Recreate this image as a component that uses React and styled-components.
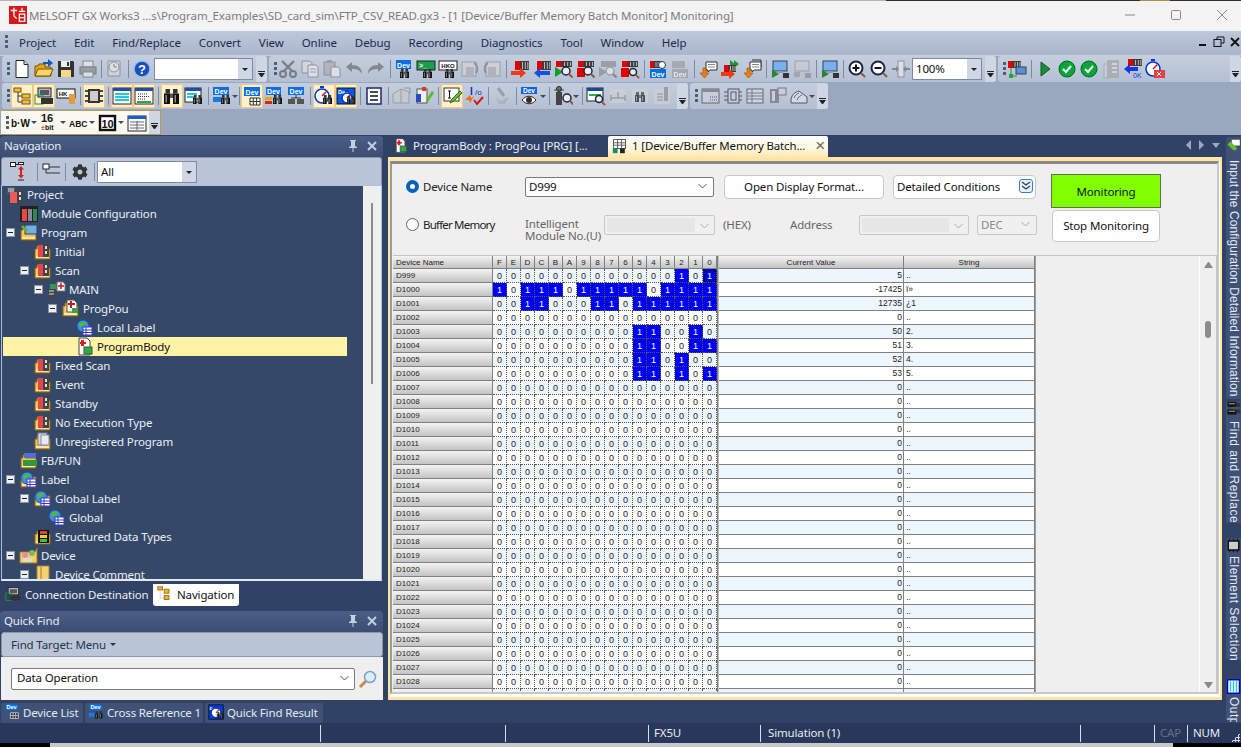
import React from 'react';
import styled, { createGlobalStyle } from 'styled-components';
import { FaCog } from 'react-icons/fa';

const Global = createGlobalStyle`
  html, body { margin: 0; padding: 0; background: #2f4063; }
  *, *::before, *::after { box-sizing: border-box; }
`;
const UI = `"Noto Sans", "Open Sans", sans-serif`;
const Navy = `background-color:#2f4063;background-image:repeating-conic-gradient(#2d3e60 0 25%,#33456a 0 50%);background-size:2px 2px;`;

/* ---------- icon primitives ---------- */
const T = ({ x, y, s = 7, f = '#fff', b = 700, a = 'start', children }) => (
  <text x={x} y={y} fontSize={s} fill={f} fontWeight={b} textAnchor={a} fontFamily="Liberation Sans, sans-serif">{children}</text>
);
const bin = (x, y, s = 1) => (
  <g transform={`translate(${x} ${y}) scale(${s})`}>
    <rect x="1" y="0" width="3" height="3" fill="#333" />
    <rect x="0" y="3" width="4" height="7" fill="#111" />
    <rect x="6" y="0" width="3" height="3" fill="#333" />
    <rect x="6" y="3" width="4" height="7" fill="#111" />
    <rect x="4" y="3" width="2" height="3" fill="#555" />
    <rect x="1" y="4" width="1" height="5" fill="#888" />
    <rect x="7" y="4" width="1" height="5" fill="#888" />
  </g>
);
const dev = (x, y, w = 14, h = 8, c = '#0a6ee0') => (
  <g>
    <rect x={x} y={y} width={w} height={h} fill={c} />
    <T x={x + w / 2} y={y + h - 1.5} a="middle" s={7}>Dev</T>
  </g>
);
const plc = (x, y, w = 14, h = 8) => (
  <g>
    <rect x={x} y={y} width={w} height={h} fill="#3a3a3a" />
    <rect x={x} y={y} width={w * 0.36} height={h} fill="#e00000" />
    {[0.5, 0.7, 0.88].map(k => <rect key={k} x={x + w * k} y={y + 1} width="1" height={h - 2} fill="#bbb" />)}
  </g>
);
const mag = (x, y, r = 4, c = '#223') => (
  <g>
    <circle cx={x} cy={y} r={r} fill="#e8eef6" stroke={c} strokeWidth="1.5" />
    <path d={`M${x + r * 0.75} ${y + r * 0.75}l3.5 3.5`} stroke="#8a5a3c" strokeWidth="2" />
  </g>
);
const win = (x, y, w, h, c = '#1f4fa0') => (
  <g>
    <rect x={x} y={y} width={w} height={h} fill="#fff" stroke="#223" />
    <rect x={x} y={y} width={w} height="3" fill={c} />
  </g>
);
const folder = (extra) => (
  <g>
    <path d="M2 7h2V4h2v3h11v10H2z" fill="#f6c65b" stroke="#8a6413" />
    <rect x="3" y="14" width="13" height="2" fill="#fbe6ad" />
    {extra}
  </g>
);
const pouBars = (
  <g>
    <rect x="5" y="3" width="5" height="12" fill="#e8444c" />
    <rect x="10" y="2" width="6" height="13" fill="#444" />
    <rect x="12" y="4" width="2" height="3" fill="#ddd" />
    <rect x="12" y="9" width="2" height="3" fill="#ddd" />
  </g>
);
const globeTable = (
  <g>
    <circle cx="8" cy="8" r="6" fill="#3d8ee0" stroke="#1c56a8" />
    <path d="M4 6c3-3 5-3 7-1l-2 3-4 1z" fill="#51b548" />
    <rect x="8" y="9" width="9" height="8" fill="#fff" stroke="#3838c8" />
    <path d="M8 12h9M8 14.500h9M11 9v8" stroke="#3838c8" />
  </g>
);
const pageBody = (
  <g>
    <path d="M4 1h8l3 3v14H4z" fill="#fff" stroke="#445" />
    <rect x="6" y="3" width="3" height="6" fill="#e01818" />
    <rect x="5" y="5" width="6" height="2" fill="#e01818" />
    <rect x="9" y="10" width="8" height="7" fill="#3da34a" stroke="#1f6a2b" />
  </g>
);
const msg = (c = '#f08000') => (
  <g>
    <path d="M8 3h11v8H12l-2 2v-2H8z" fill="#fff" stroke="#333" />
    <path d="M10 5.500h7M10 8h7" stroke="#888" />
    <path d="M5 9v5H2l4.500 5 4.500-5H8V9z" fill={c} stroke="#a04a00" strokeWidth=".6" />
  </g>
);
const pc = (
  <g>
    <rect x="3" y="2" width="14" height="10" fill="#78b0f0" stroke="#345" />
    <rect x="7" y="12" width="6" height="2" fill="#99a" />
    <path d="M2 11l7 4-7 4z" fill="#1c8a2c" />
    <rect x="13" y="14" width="6" height="5" fill="#333" />
  </g>
);
const clock = (x, y, r, c = '#0038c8') => (
  <g>
    <circle cx={x} cy={y} r={r} fill="#fff" stroke={c} strokeWidth="1.600" />
    <rect x={x - 2} y={y - r - 3} width="4" height="2" fill={c} />
    <path d={`M${x} ${y}l${r * .6} -${r * .6}`} stroke="#e01010" strokeWidth="1.500" />
  </g>
);
const check = (
  <g>
    <circle cx="10" cy="10" r="8" fill="#0aa53a" stroke="#066b26" />
    <path d="M6 10l3 3 5-6" fill="none" stroke="#fff" strokeWidth="2" />
  </g>
);

const ICONS = {
  new: <><path d="M4 1.500h8l4 4v13H4z" fill="#fff" stroke="#222" /><path d="M12 1.500v4h4" fill="#ddd" stroke="#222" /></>,
  open: <><path d="M1 17V7h3l1-2h6v3h6v9z" fill="#e6a31c" stroke="#7a5200" /><path d="M1 17l3-7h15l-3 7z" fill="#fbd469" stroke="#7a5200" /><path d="M9 3h5V0l5 4-5 4V5H9z" fill="#1557b8" /></>,
  save: <><path d="M2 2h15l1 1v15H2z" fill="#333" /><rect x="5" y="2" width="9" height="6" fill="#eee" /><rect x="5" y="11" width="10" height="7" fill="#f6d88a" /><rect x="11" y="3" width="2" height="4" fill="#333" /></>,
  print: <><rect x="5" y="2" width="10" height="6" fill="#eee" stroke="#667" /><rect x="2" y="8" width="16" height="7" fill="#888" stroke="#556" /><rect x="5" y="13" width="10" height="5" fill="#eee" stroke="#667" /></>,
  clockpage: <><path d="M3 2h12v15H3z" fill="#ddd" stroke="#778" /><circle cx="9" cy="8" r="5" fill="#eee" stroke="#778" /><path d="M9 5v3h3" stroke="#667" fill="none" /></>,
  help: <><circle cx="10" cy="10" r="8" fill="#1a4fb8" stroke="#9cc0ee" strokeWidth="1.500" /><T x="10" y="14.500" a="middle" s={13}>?</T></>,
  cut: <><path d="M4 2l10 10M16 2L6 12" stroke="#556" strokeWidth="2.400" /><circle cx="5" cy="15" r="3" fill="none" stroke="#556" strokeWidth="2" /><circle cx="15" cy="15" r="3" fill="none" stroke="#556" strokeWidth="2" /></>,
  copy: <><path d="M2 2h8l2 2v10H2z" fill="#ddd" stroke="#778" /><path d="M8 6h8l2 2v10H8z" fill="#eee" stroke="#778" /><path d="M10 10h6M10 13h6" stroke="#889" /></>,
  paste: <><rect x="2" y="3" width="11" height="13" fill="#aab" stroke="#778" /><rect x="5" y="1" width="5" height="3" fill="#889" /><path d="M9 8h7l2 2v8H9z" fill="#eee" stroke="#778" /></>,
  undo: <path d="M2 8l6-5v3c6 0 10 3 10 9-2-4-5-5-10-5v3z" fill="#667" />,
  redo: <path d="M18 8l-6-5v3C6 6 2 9 2 15c2-4 5-5 10-5v3z" fill="#667" />,
  devbin: <>{dev(2, 1, 15, 9)}{bin(6, 10, .9)}</>,
  greenbin: <><rect x="1" y="2" width="18" height="9" fill="#1aa04a" stroke="#222" /><T x="3" y="9">&gt;_</T>{bin(7, 10, .9)}</>,
  hkobin: <><rect x="1" y="2" width="18" height="9" fill="#fff" stroke="#222" /><T x="10" y="9" a="middle" f="#111" s={6}>HKO</T>{bin(7, 10, .9)}</>,
  pages1: <><rect x="2" y="3" width="14" height="14" fill="#cfd6e2" stroke="#889" /><path d="M6 8h8v8H6z" fill="#aab" /><path d="M14 4c4 2 4 7 2 10" stroke="#778" fill="none" strokeWidth="2" /></>,
  pages2: <><rect x="4" y="3" width="14" height="14" fill="#cfd6e2" stroke="#889" /><path d="M6 8h8v8H6z" fill="#aab" /><path d="M6 4C2 6 2 11 4 14" stroke="#778" fill="none" strokeWidth="2" /></>,
  plcR: <>{plc(5, 2, 14, 9)}<path d="M1 12h9V9l6 5-6 5v-3H1z" fill="#ef3a12" /></>,
  plcL: <>{plc(5, 2, 14, 9)}<path d="M18 12H8V9l-6 5 6 5v-3h10z" fill="#1550e0" /></>,
  plcFindG: <>{plc(2, 2, 16, 6)}<path d="M1 8l8 5-8 5z" fill="#109a28" />{mag(12, 12, 4)}</>,
  plcFindR: <>{plc(2, 2, 16, 6)}<rect x="1" y="9" width="8" height="9" fill="#e00000" />{mag(12, 12, 4)}</>,
  plcFindGrey: <><rect x="3" y="2" width="15" height="6" fill="#889" /><path d="M1 8l8 5-8 5z" fill="#889" />{mag(12, 12, 4, '#889')}</>,
  plcFindR2: <>{plc(2, 2, 16, 6)}<rect x="1" y="9" width="8" height="9" fill="#e00000" />{mag(13, 13, 3.500)}</>,
  devplc: <>{plc(2, 2, 11, 7)}<circle cx="14" cy="6" r="3.500" fill="#fff" stroke="#333" />{dev(2, 10, 16, 9)}</>,
  devoff: <><rect x="2" y="2" width="13" height="7" fill="#99a" />{dev(2, 10, 16, 9, '#99a')}</>,
  downmsg: msg(),
  plcplay: <><path d="M10 1l5 4-5 4zM14 1l5 4-5 4z" fill="#1c9a30" />{plc(4, 6, 12, 7)}<path d="M1 13h8v-3l6 5-6 5v-3H1z" fill="#ef3a12" /></>,
  downmsgs: <><path d="M10 1h9v7" fill="none" stroke="#333" />{msg()}</>,
  pcG: pc,
  pcoff: <><rect x="3" y="2" width="14" height="10" fill="#ccd" stroke="#889" /><rect x="2" y="13" width="6" height="5" fill="#99a" /><rect x="13" y="14" width="6" height="5" fill="#889" /></>,
  zoomin: <><circle cx="9" cy="9" r="6.500" fill="#fff" stroke="#1c2340" strokeWidth="2" /><path d="M5.500 9h7M9 5.500v7" stroke="#111" strokeWidth="2" /><path d="M14 14l4 4" stroke="#8a5a3c" strokeWidth="2" /></>,
  zoomout: <><circle cx="9" cy="9" r="6.500" fill="#fff" stroke="#1c2340" strokeWidth="2" /><path d="M5.500 9h7" stroke="#111" strokeWidth="2" /><path d="M14 14l4 4" stroke="#8a5a3c" strokeWidth="2" /></>,
  fitw: <><rect x="7" y="2" width="6" height="16" fill="#eee" stroke="#778" /><path d="M1 10h5M14 10h5" stroke="#667" strokeWidth="2" /><path d="M5 7l3 3-3 3zM15 7l-3 3 3 3z" fill="#667" /></>,
  link: <>{plc(1, 2, 13, 7)}<path d="M4 9v8h6" stroke="#1a9a30" fill="none" /><rect x="9" y="8" width="10" height="7" fill="#5d8fd8" stroke="#345" /><rect x="2" y="15" width="4" height="4" fill="#22a838" /></>,
  play: <path d="M6 3l9 7-9 7z" fill="#1e8a38" stroke="#0c5a20" />,
  check,
  modoff: <><rect x="3" y="5" width="6" height="14" fill="#b8d8b8" stroke="#8a9" /><rect x="6" y="1" width="12" height="18" fill="#99a3a0" /><path d="M11 5h5M11 9h5M11 13h5" stroke="#cde" strokeWidth="2" /></>,
  plcok: <>{plc(5, 0, 14, 7)}<path d="M15 8H7V5l-6 5 6 5v-3h8z" fill="#1238e8" /><T x="10" y="18.500" s={7} f="#1238e8" b={400}>0K</T></>,
  timerx: <>{clock(8, 10, 7)}<rect x="9" y="11" width="11" height="8" fill="#e84040" /><path d="M12 13l4 4M16 13l-4 4" stroke="#fff" /></>,
  tree: <><rect x="2" y="2" width="7" height="4" fill="#f0c040" stroke="#7a5200" /><path d="M6 6v10h4M6 10h4" stroke="#333" fill="none" /><rect x="10" y="8" width="8" height="4" fill="#f0c040" stroke="#7a5200" /><rect x="10" y="14" width="8" height="4" fill="#f0c040" stroke="#7a5200" /></>,
  conn: <><rect x="4" y="2" width="13" height="9" fill="#bbb" stroke="#222" /><rect x="6" y="4" width="9" height="5" fill="#556" /><rect x="1" y="9" width="8" height="9" fill="none" stroke="#1a9a30" /><rect x="7" y="12" width="12" height="6" fill="#333" /></>,
  hko: <><rect x="1" y="3" width="18" height="9" fill="#fff" stroke="#111" /><T x="7" y="10" a="middle" f="#111" s={6}>HK</T><path d="M13 8h6v10h-6z" fill="#e3a03a" /></>,
  chip: <><rect x="4" y="3" width="12" height="14" fill="#333" /><rect x="6" y="5" width="8" height="10" fill="#ccc" /><path d="M1 5h3M1 10h3M1 15h3M16 5h3M16 10h3M16 15h3" stroke="#111" strokeWidth="1.500" /></>,
  winCyan: <>{win(1, 2, 18, 16)}<path d="M3 8h14M3 11h14M3 14h14" stroke="#22c8d8" strokeWidth="2" /></>,
  winDots: <>{win(1, 2, 18, 16)}<path d="M4 8h10M4 10.500h12M4 13h8" stroke="#333" strokeDasharray="1 1" /><rect x="3" y="15" width="14" height="2" fill="#28a838" /></>,
  bins: <>{bin(2, 3, 1.500)}</>,
  winbin: <>{win(1, 2, 16, 14)}<path d="M3 8h10M3 11h8" stroke="#22c8d8" strokeWidth="2" />{bin(9, 9, .9)}</>,
  devbindrop: <><rect x="1" y="1" width="16" height="8" fill="#0a6ee0" /><T x="9" y="7.500" a="middle">Dev</T><rect x="1" y="11" width="8" height="5" fill="#1a78e8" />{bin(9, 9, .9)}</>,
  devtable: <>{dev(2, 1, 16, 9)}<path d="M8 12h10v7H8zM8 15.500h10M11.300 12v7M14.600 12v7" fill="#fff" stroke="#333" /></>,
  devbinR: <>{dev(2, 1, 15, 8)}<rect x="1" y="11" width="7" height="3" fill="#e5a020" /><rect x="1" y="15" width="7" height="3" fill="#e02020" />{bin(9, 9, .9)}</>,
  devtree: <>{dev(2, 1, 16, 8)}<path d="M10 9v3M5 12h10" stroke="#333" /><rect x="2" y="13" width="7" height="5" fill="#555" /><rect x="11" y="13" width="7" height="5" fill="#555" /></>,
  timerbin: <>{clock(8, 10, 7)}{bin(9, 9, .9)}</>,
  timerdev: <><rect x="1" y="2" width="18" height="16" fill="#0a5ae0" stroke="#012" /><T x="2" y="8" s={5.500}>Dev</T>{clock(11, 12, 5)}{bin(11, 10, .8)}</>,
  list: <><rect x="3" y="2" width="14" height="16" fill="#fff" stroke="#1c2a6a" strokeWidth="1.500" /><path d="M6 6h8M6 10h8M6 14h8" stroke="#112" strokeWidth="1.500" /></>,
  pagesoff: <><path d="M1 8l8-5 8 3v11H1z" fill="#c4ccd8" stroke="#889" /><path d="M9 3v14" stroke="#889" /><path d="M12 2h6v6" fill="none" stroke="#778" /></>,
  wiz: <><rect x="3" y="3" width="10" height="14" fill="#eee" stroke="#555" /><path d="M12 14L18 5l2 2-6 9z" fill="#62b828" /><rect x="2" y="8" width="5" height="8" fill="#2848c8" /><rect x="8" y="1" width="4" height="4" fill="#e83030" /></>,
  edit: <><rect x="2" y="2" width="15" height="13" fill="#fff" stroke="#333" /><path d="M6 5h3M7.500 5v7M6 12h3" stroke="#111" /><path d="M8 17l2-4 8-8 2 2-8 8z" fill="#62c028" stroke="#2a7010" /></>,
  io: <><T x="6" y="9" s={10} f="#1030c0">I</T><T x="11" y="9" s={8} f="#1030c0" b={400}>/o</T><path d="M1 14l5-5 1 3 3-2-4 7-1-3z" fill="#f07010" /><path d="M10 14l3 4 6-7" fill="none" stroke="#d01818" strokeWidth="2" /></>,
  checkoff: <><path d="M3 10l5 5 9-4-4 7H7z" fill="#aab" /><path d="M6 2l6 8" stroke="#889" strokeWidth="3" /></>,
  deveye: <><rect x="1" y="1" width="16" height="7" fill="#1264d8" /><T x="9" y="7" a="middle" s={6.500}>Dev</T><path d="M2 14c4-5 10-5 14 0-4 5-10 5-14 0z" fill="#fff" stroke="#222" /><circle cx="9" cy="14" r="3" fill="#3a2a20" /></>,
  plug: <><circle cx="6" cy="3" r="2.500" fill="#777" stroke="#222" /><rect x="3" y="6" width="6" height="13" fill="#444" /><path d="M1 4h10" stroke="#444" />{mag(14, 12, 4)}</>,
  winmag: <>{win(1, 2, 16, 13, '#144a9c')}<rect x="3" y="8" width="12" height="2" fill="#28b048" />{mag(13, 13, 3.500)}</>,
  resize: <><rect x="2" y="3" width="16" height="14" fill="#cdd3dd" /><path d="M3 12h14M10 6v6M3 9v6M17 9v6" stroke="#889" strokeWidth="1.500" /></>,
  binoff: <><rect x="2" y="3" width="16" height="14" fill="#cdd3dd" />{bin(5, 6, 1)}</>,
  clipoff: <><rect x="2" y="3" width="16" height="15" fill="#cdd3dd" /><path d="M5 8h6M5 11h6M5 14h6" stroke="#778" /><rect x="12" y="1" width="4" height="14" fill="#889" /></>,
  winoff: <><rect x="1" y="3" width="17" height="14" fill="#c8cfda" stroke="#667" /><rect x="1" y="3" width="17" height="3" fill="#889" /><path d="M9 11h7M9 14h7" stroke="#556" strokeDasharray="1 1" /></>,
  chipoff: <><rect x="5" y="3" width="11" height="14" fill="#c8cfda" stroke="#556" /><rect x="8" y="6" width="5" height="8" fill="none" stroke="#556" /><path d="M1 6h4M1 10h4M1 14h4M16 6h3M16 10h3M16 14h3" stroke="#556" /></>,
  tableoff: <><rect x="2" y="3" width="16" height="14" fill="#d0d6e0" stroke="#667" /><path d="M2 7h16M2 10h16M2 13h16M7 3v14" stroke="#778" /></>,
  listoff: <><rect x="3" y="3" width="9" height="14" fill="#889" /><rect x="5" y="5" width="3" height="10" fill="#ccd" /><rect x="11" y="2" width="8" height="7" fill="#ccd" stroke="#778" /></>,
  stack: <><path d="M2 15c0-6 4-9 8-10l8 6v6H2z" fill="#d4dae4" stroke="#556" /><path d="M5 12c1-3 3-4 5-5M8 14c1-3 3-4 5-5" stroke="#667" fill="none" /></>,
  bw: <T x="0" y="14" s={10} f="#111">b·W</T>,
  bit16: <><T x="1" y="9" s={11} f="#111">16</T><T x="1" y="17" s={7} f="#c00000" b={400}>±</T><T x="5" y="17" s={7} f="#111">bit</T></>,
  abc: <T x="0" y="14" s={8.500} f="#111">ABC</T>,
  ten: <><rect x="2" y="3" width="15" height="14" fill="#fff" stroke="#111" strokeWidth="2.400" /><T x="9.500" y="14.500" a="middle" s={11} f="#111">10</T></>,
  table: <>{win(1, 3, 18, 15, '#1b5fc8')}<path d="M3 9h14M3 12h14M3 15h14M10 8v9" stroke="#667" /></>,
  collapseTree: <><rect x="0.500" y="0.500" width="5" height="4" fill="#fff" stroke="#222" /><rect x="8.500" y="0.500" width="5" height="2" fill="#fff" stroke="#222" /><path d="M5.500 2.500h3" stroke="#222" /><path d="M11 4l3 3.500h-2V13h2l-3 3.500L8 13h2V7.500H8z" fill="#d42020" /><path d="M8 18h6" stroke="#222" /></>,
  expandTree: <><rect x="1" y="2" width="6" height="5" fill="#fff" stroke="#222" /><path d="M7 5h11M7 11h11M4 7v4h3" stroke="#333" fill="none" /></>,
  proj: <><rect x="2" y="2" width="8" height="7" fill="#555" /><rect x="3" y="3" width="6" height="4" fill="#99a" /><rect x="5" y="7" width="7" height="11" fill="#ee5a5a" /><rect x="12" y="5" width="6" height="13" fill="#444" /><rect x="14" y="7" width="2" height="3" fill="#ddd" /><rect x="14" y="12" width="2" height="3" fill="#ddd" /></>,
  module: <><rect x="1" y="2" width="18" height="16" fill="#222" /><rect x="3" y="5" width="5" height="12" fill="#e44" /><rect x="9" y="5" width="4" height="12" fill="#889" /><rect x="14" y="5" width="4" height="12" fill="#2a8a52" /></>,
  progf: folder(<><rect x="6" y="2" width="12" height="9" fill="#70aee8" stroke="#345" /><path d="M3 3l5 5" stroke="#62b828" strokeWidth="2.500" /></>),
  pou: folder(pouBars),
  main: <><rect x="1" y="9" width="7" height="9" fill="#444" /><path d="M2 11h5M2 14h5" stroke="#ddd" /><rect x="3" y="4" width="6" height="5" fill="#2f9a50" /><path d="M10 2h6l2 2v7h-8z" fill="#fff" stroke="#777" /><path d="M11 6h6M14 3v6" stroke="#d01818" strokeWidth="1.500" /></>,
  progpou: folder(<><path d="M6 1h7l3 3v9H6z" fill="#fff" stroke="#555" /><path d="M7 5h7M10 2v7" stroke="#d01818" strokeWidth="2" /><rect x="11" y="9" width="6" height="5" fill="#3da34a" /></>),
  local: globeTable,
  body: pageBody,
  unreg: folder(<><rect x="5" y="1" width="9" height="12" fill="#d8dce4" stroke="#778" /><rect x="8" y="3" width="8" height="10" fill="#e8ecf2" stroke="#889" /></>),
  fb: folder(<><rect x="5" y="2" width="12" height="5" fill="#4e6fd8" /><rect x="4" y="9" width="14" height="6" fill="#2f9a3a" /></>),
  labelf: folder(globeTable),
  struct: folder(<><rect x="5" y="3" width="11" height="13" fill="#111" /><rect x="7" y="4" width="7" height="3" fill="#e84040" /><rect x="7" y="8" width="7" height="3" fill="#f0d020" /><rect x="7" y="12" width="7" height="3" fill="#40c040" /></>),
  devf: <><path d="M1 6h15l2-4v15H1z" fill="#f3cf6a" stroke="#9a7a20" /><circle cx="6" cy="9" r="3" fill="#e88aa0" /><circle cx="13" cy="7" r="3" fill="#78b868" /><rect x="4" y="12" width="9" height="4" fill="#ddc" /></>,
  comment: <><path d="M4 1h12v18H4z" fill="#f4d272" stroke="#a8862c" /><path d="M8 1v18" stroke="#c8a848" strokeWidth="2" /></>,
  monitor: <><rect x="2" y="2" width="15" height="11" fill="#fff" stroke="#333" /><path d="M2 6h15M2 9h15M7 2v11M12 2v11" stroke="#444" /><rect x="1" y="13" width="6" height="6" fill="#1a8a6a" /><rect x="10" y="13" width="6" height="6" fill="#222" /></>,
  quickres: <><rect x="1" y="1" width="18" height="18" fill="#0a3ad8" stroke="#012" /><T x="2" y="7" s={5}>Dev</T>{clock(10, 11, 6)}{bin(11, 10, .8)}</>,
  crossref: <>{dev(2, 0, 15, 8)}<rect x="1" y="11" width="7" height="5" fill="#1a78e8" />{bin(9, 9, .9)}</>,
  devlist: <>{dev(2, 0, 15, 8)}<path d="M8 11h10v7H8zM8 14.500h10M11.300 11v7M14.600 11v7" fill="#223" stroke="#ddd" /></>,
  sideInput: <><path d="M7 3h12v9H7z" fill="#fff" stroke="#333" /><path d="M2 10l4-4 9 9-3 3-3-1z" fill="#62c028" /></>,
  sideBin: <g transform="rotate(90 10 10)">{bin(1, 1, 1.700)}</g>,
  sideChip: <><rect x="3" y="4" width="14" height="12" fill="#ccc" stroke="#111" strokeWidth="2" /><path d="M5 1v3M10 1v3M15 1v3M5 16v3M10 16v3M15 16v3" stroke="#111" strokeWidth="1.500" /></>,
  sideOut: <><rect x="2" y="1" width="16" height="18" fill="#fff" stroke="#0000c0" strokeWidth="2" /><path d="M6 3v14M10 3v14M14 3v14" stroke="#22c8d8" strokeWidth="2" /></>,
  navTab: <><rect x="1" y="1" width="6" height="4" fill="#f0b820" stroke="#8a6413" /><path d="M4 5v10h5" stroke="#ccc" fill="none" /><rect x="9" y="4" width="6" height="5" fill="#f0b820" stroke="#8a6413" /><rect x="9" y="12" width="6" height="5" fill="#f0b820" stroke="#8a6413" /></>,
  logo: <><rect width="20" height="20" fill="#d81818" /><path d="M2 5h7M5.500 2v9l3 3M11 6h7M14.500 2v4M11.500 9h6v8h-6zM11.500 13h6" fill="none" stroke="#fff" strokeWidth="1.400" /></>,
};

const Svg = styled.svg`
  display: block;
  flex: none;
  overflow: hidden;
  letter-spacing: 0;
`;
const Icon = ({ name, size = 20 }) => <Svg width={size} height={size} viewBox="0 0 20 20">{ICONS[name]}</Svg>;

/* ---------- window chrome ---------- */
const Page = styled.div`
  width: 1241px;
  height: 747px;
  overflow: hidden;
  display: flex;
  flex-direction: column;
  font-family: ${UI};
  font-size: 11.5px;
  letter-spacing: -0.15px;
  ${Navy}
`;
const TopStrip = styled.div`
  height: 1px;
  flex: none;
  background: linear-gradient(90deg, #b4b4b4 0 886px, #332b26 886px 1140px, #b08a55 1140px 1170px, #332b26 1170px);
`;
const TitleBar = styled.header`
  height: 30px;
  flex: none;
  background: #f3f3f3;
  display: flex;
  align-items: center;
  gap: 2px;
  padding: 0 0 2px 9px;
  color: #7c7c7c;
  letter-spacing: -0.09px;
`;
const CaptionButtons = styled.div`
  margin-left: auto;
  margin-right: -4px;
  display: flex;
`;
const CaptionButton = styled.button`
  width: 46px;
  height: 28px;
  border: 0;
  padding: 0;
  background: none;
  display: flex;
  align-items: center;
  justify-content: center;
`;
const MenuBar = styled.nav`
  height: 25px;
  flex: none;
  display: flex;
  align-items: center;
  padding: 0 0 2px 5px;
  background: linear-gradient(#bdc8da, #a9b6cb);
  color: #1c2a4c;
  border-bottom: 1px solid #c9d2e0;
  letter-spacing: -0.08px;
`;
const MenuItem = styled.span`
  margin-right: 18px;
`;
const MdiButtons = styled.div`
  margin-left: auto;
  display: flex;
  gap: 4px;
  align-items: center;
`;
const Grip = styled.i`
  width: 3px;
  height: ${p => p.$h || 14}px;
  flex: none;
  margin: 0 ${p => p.$mr ?? 9}px 0 ${p => p.$ml ?? 0}px;
  background: radial-gradient(circle at 1.5px 1.5px, #46587e 1.4px, transparent 1.5px) 0 0 / 3px 5px;
`;
const ToolArea = styled.div`
  height: 79px;
  flex: none;
  background: #9aa8bf;
  display: flex;
  flex-direction: column;
`;
const ToolRow = styled.div`
  display: flex;
  height: 27px;
  padding-left: 2px;
  gap: 2px;
  flex: none;
`;
const ToolBar = styled.div`
  display: flex;
  align-items: center;
  height: 26px;
  padding-left: 5px;
  background: linear-gradient(#c4cedd, #b4c0d3);
  border-radius: 3px;
  position: relative;
  width: ${p => p.$w}px;
  flex: ${p => (p.$fill ? '1' : 'none')};
  overflow: hidden;
`;
const WhiteBar = styled(ToolBar)`
  background: #fbf8ef;
  border-top: 1px solid #b79b55;
  border-bottom: 1px solid #b79b55;
  border-right: 1px solid #b79b55;
  border-radius: 0;
  height: 25px;
  margin-left: -1px;
`;
const Slot = styled.span`
  width: ${p => p.$w || 22}px;
  height: 24px;
  flex: none;
  display: flex;
  align-items: center;
  justify-content: center;
  background: ${p => (p.$on ? '#fdf0cb' : 'transparent')};
  box-shadow: ${p => (p.$on ? 'inset 0 0 0 1px #f0c887' : 'none')};
  opacity: ${p => (p.$off ? 0.65 : 1)};
  filter: ${p => (p.$off ? 'grayscale(1)' : 'none')};
`;
const Sep = styled.span`
  width: 1px;
  height: 18px;
  flex: none;
  background: #7c8aa3;
  margin: 0 ${p => p.$g ?? 2.5}px;
`;
const Drop = styled.i`
  width: 6px;
  height: 3px;
  flex: none;
  margin-left: -1px;
  margin-right: ${p => p.$mr ?? 0}px;
  border: 3px solid transparent;
  border-top: 3px solid #3c4a68;
  border-bottom: 0;
`;
const Overflow = styled.span`
  position: absolute;
  right: 0;
  top: 0;
  bottom: 0;
  width: 11px;
  background: #cfd7e4;
  &::after {
    content: '';
    position: absolute;
    left: 2px;
    bottom: 5px;
    width: 7px;
    height: 4px;
    border: 3.500px solid transparent;
    border-top: 4px solid #222;
    border-bottom: 0;
  }
  &::before {
    content: '';
    position: absolute;
    left: 2px;
    bottom: 10px;
    width: 7px;
    height: 1px;
    background: #222;
  }
`;
const Combo = styled.span`
  width: ${p => p.$w}px;
  height: 22px;
  flex: none;
  margin-left: ${p => p.$ml ?? 2}px;
  background: #fff;
  border: 1px solid #7e8aa2;
  display: flex;
  align-items: center;
  padding: 0 0 1px ${p => p.$pad ?? 3}px;
  color: #111;
  overflow: hidden;
  position: relative;
  &::after {
    content: '';
    position: absolute;
    right: 0;
    top: 0;
    bottom: 0;
    width: 14px;
    background: #cfd7e4;
  }
  &::before {
    content: '';
    position: absolute;
    right: 4px;
    top: 9px;
    width: 6px;
    height: 3px;
    z-index: 1;
    border: 3px solid transparent;
    border-top: 3px solid #222;
    border-bottom: 0;
  }
`;

const Tools = ({ items }) => items.map((it, i) => {
  if (it === '|') return <Sep key={i} />;
  if (it === 'v') return <Drop key={i} />;
  if (typeof it !== 'string') return <React.Fragment key={i}>{it}</React.Fragment>;
  const on = it.endsWith('!');
  const off = it.endsWith('~');
  const name = on || off ? it.slice(0, -1) : it;
  return <Slot key={i} $on={on} $off={off}><Icon name={name} /></Slot>;
});

/* ---------- body layout ---------- */
const Body = styled.div`
  height: 588px;
  flex: none;
  display: flex;
`;
const LeftColumn = styled.aside`
  width: 385px;
  flex: none;
  display: flex;
  flex-direction: column;
  padding-top: 1px;
`;
const PaneTitle = styled.div`
  height: 21px;
  flex: none;
  width: 383px;
  display: flex;
  align-items: center;
  padding: 0 4px 2px;
  color: #e8edf6;
  background: linear-gradient(#4b5e85, #3b4d72);
  border-radius: 4px 4px 0 0;
  margin-top: ${p => p.$mt || 0}px;
`;
const PaneActions = styled.div`
  margin-left: auto;
  display: flex;
  gap: 9px;
  align-items: center;
  padding-right: 2px;
`;
const NavTools = styled.div`
  width: 381px;
  height: 28px;
  margin-left: 1px;
  padding-left: 4px;
  flex: none;
  display: flex;
  align-items: center;
  background: #bac6d8;
  border: 1px solid #8d97a8;
  border-bottom: 0;
  border-radius: 3px 3px 0 0;
`;
const TreeFrame = styled.div`
  width: 381px;
  height: 396px;
  margin-left: 1px;
  flex: none;
  display: flex;
  overflow: hidden;
  border: 1px solid #a9c3e6;
  border-bottom: 2px solid #dfe8f4;
`;
const Tree = styled.div`
  flex: 1;
  background: #354868;
  padding: 0 0 0 1px;
  overflow: hidden;
  & > :first-child {
    margin-top: -1px;
  }
`;
const TreeRow = styled.div`
  height: 19px;
  width: 344px;
  display: flex;
  align-items: center;
  padding-left: ${p => p.$indent}px;
  color: ${p => (p.$sel ? '#111' : '#e9eef6')};
  background: ${p => (p.$sel ? '#fff3a6' : 'transparent')};
  white-space: nowrap;
`;
const TreeIcon = styled.span`
  width: 16px;
  height: 16px;
  flex: none;
  margin: 0 4px 0 0;
  svg {
    margin: -2px;
  }
`;
const Toggle = styled.span`
  width: 9px;
  height: 9px;
  flex: none;
  margin: 0 6px 0 0;
  background: #eef0f3;
  border: 1px solid #8a94a8;
  display: flex;
  align-items: center;
  justify-content: center;
  &::after {
    content: '';
    width: 5px;
    height: 1px;
    background: #222;
  }
`;
const TreeScroll = styled.div`
  width: 18px;
  flex: none;
  background: #efefef;
  padding-top: 17px;
  display: flex;
  justify-content: center;
`;
const TreeThumb = styled.div`
  width: 2px;
  height: 181px;
  background: #8b8b8b;
`;
const PaneTabs = styled.div`
  height: 23px;
  flex: none;
  margin-top: 3px;
  display: flex;
  padding-left: 5px;
`;
const PaneTab = styled.div`
  display: flex;
  align-items: center;
  gap: 4px;
  height: 22px;
  width: ${p => p.$w}px;
  padding: ${p => (p.$on ? '0 4px 2px' : '0 0 2px')};
  background: ${p => (p.$on ? '#fff' : 'transparent')};
  color: ${p => (p.$on ? '#111' : '#e9eef6')};
  border-radius: 0 0 3px 3px;
  white-space: nowrap;
`;
const FindBar = styled.div`
  width: 382px;
  height: 25px;
  flex: none;
  margin-left: 1px;
  background: #bac6d8;
  border: 1px solid #8d97a8;
  border-radius: 3px;
  display: flex;
  align-items: center;
  padding-left: 9px;
  gap: 4px;
  color: #27324c;
`;
const SmallDown = styled.i`
  width: 6px;
  height: 3px;
  border: 3px solid transparent;
  border-top: 3px solid #333;
  border-bottom: 0;
  margin-top: -1px;
`;
const FindBody = styled.div`
  width: 382px;
  height: 43px;
  flex: none;
  margin-left: 1px;
  background: #efefef;
  display: flex;
  align-items: center;
  padding-left: 10px;
  gap: 3px;
`;
const SearchCombo = styled.div`
  width: 344px;
  height: 22px;
  flex: none;
  background: #fff;
  border: 1px solid #7a7a7a;
  border-radius: 2px;
  display: flex;
  align-items: center;
  justify-content: space-between;
  padding: 0 5px 2px;
  color: #111;
`;
const DocksBottom = styled.div`
  display: flex;
  gap: 2px;
  margin-top: 3px;
  padding-left: 1px;
  height: 20px;
  flex: none;
`;
const DockTab = styled.div`
  display: flex;
  align-items: center;
  gap: 3px;
  width: ${p => p.$w}px;
  flex: none;
  padding: 0 0 2px 3px;
  background: #3f5176;
  color: #e4e9f3;
  border-radius: 2px;
  white-space: nowrap;
`;
const Main = styled.main`
  flex: 1;
  min-width: 0;
  display: flex;
  flex-direction: column;
`;
const DocTabs = styled.div`
  height: 22px;
  flex: none;
  display: flex;
  padding-left: 8px;
  position: relative;
`;
const DocTab = styled.div`
  display: flex;
  align-items: center;
  height: 21px;
  margin-top: 1px;
  width: ${p => p.$w}px;
  padding: 0 0 2px ${p => (p.$on ? 4 : 0)}px;
  gap: 4px;
  white-space: nowrap;
  color: ${p => (p.$on ? '#111' : '#e9eef6')};
  background: ${p => (p.$on ? 'linear-gradient(#ffffff, #fff6de 60%, #ffe8ad)' : 'transparent')};
  border-radius: 2px 2px 0 0;
`;
const TabClose = styled.span`
  margin-left: auto;
  margin-right: 3px;
  color: #666;
  font: 17px "Liberation Sans", sans-serif;
`;
const TabNav = styled.div`
  position: absolute;
  right: 6px;
  top: 5px;
  display: flex;
  gap: 8px;
  align-items: center;
`;
const Tri = styled.i`
  display: block;
  width: ${p => (p.$dir === 'd' ? 8 : 5)}px;
  height: ${p => (p.$dir === 'd' ? 5 : 10)}px;
  border: 5px solid transparent;
  ${p => p.$dir === 'l' && 'border-right:5px solid #9aa8c0;border-left:0;'}
  ${p => p.$dir === 'r' && 'border-left:5px solid #9aa8c0;border-right:0;'}
  ${p => p.$dir === 'd' && 'border-top:5px solid #9aa8c0;border-bottom:0;border-left-width:4px;border-right-width:4px;'}
`;
const DocFrame = styled.section`
  height: 543px;
  flex: none;
  margin: 0 4px 0 3px;
  border: 2px solid #ffe6a6;
  border-top-width: 4px;
  border-bottom-width: 3px;
  background: #fff;
  display: flex;
  flex-direction: column;
  overflow: hidden;
`;
const DocInner = styled.div`
  flex: 1;
  min-height: 0;
  display: flex;
  flex-direction: column;
  background: #efefef;
  border-top: 3px solid #8a8a8a;
  border-left: 2px solid #9a9a9a;
  border-right: 2px solid #c8c8c8;
  border-bottom: 2px solid #c8c8c8;
  margin-bottom: 3px;
  margin-right: 1px;
`;
const Form = styled.div`
  height: 91px;
  flex: none;
  display: flex;
  padding-left: 14px;
  color: #222;
`;
const FormFields = styled.div`
  display: flex;
  flex-direction: column;
  padding-top: 11px;
`;
const FormRow = styled.div`
  display: flex;
  align-items: center;
  height: ${p => p.$h}px;
  margin-top: ${p => p.$mt || 0}px;
`;
const Radio = styled.label`
  width: 119px;
  flex: none;
  display: flex;
  align-items: center;
  gap: 4px;
  padding-bottom: 2px;
  letter-spacing: ${p => p.$ls ?? -0.15}px;
  &::before {
    content: '';
    width: 13px;
    height: 13px;
    flex: none;
    border-radius: 50%;
    background: ${p => (p.$on ? '#fff' : '#fdfdfd')};
    border: ${p => (p.$on ? '4px solid #0563b8' : '1px solid #666')};
  }
`;
const Select = styled.div`
  width: ${p => p.$w}px;
  height: 20px;
  flex: none;
  margin-left: ${p => p.$ml || 0}px;
  border: 1px solid ${p => (p.$off ? '#c8c8c8' : '#7a7a7a')};
  background: ${p => (p.$off ? '#f0f0f0' : '#fff')};
  border-radius: 2px;
  display: flex;
  align-items: center;
  justify-content: space-between;
  padding: ${p => (p.$inset ? '2px 19px 2px 2px' : '0 6px 2px 3px')};
  color: ${p => (p.$off ? '#888' : '#111')};
  position: relative;
`;
const InsetFill = styled.div`
  flex: 1;
  align-self: stretch;
  background: #e6e6e6;
`;
const Chev = styled.svg`
  width: 9px;
  height: 6px;
  flex: none;
  ${p => p.$abs && 'position:absolute;right:5px;top:7px;'}
`;
const Chevron = ({ abs, c = '#555' }) => (
  <Chev $abs={abs} viewBox="0 0 9 6"><path d="M.5 1l4 4 4-4" fill="none" stroke={c} /></Chev>
);
const FormButton = styled.button`
  width: ${p => p.$w}px;
  height: ${p => p.$h || 24}px;
  flex: none;
  margin-left: ${p => p.$ml || 0}px;
  font: 11.5px ${UI};
  letter-spacing: inherit;
  color: #111;
  background: #fff;
  border: 1px solid #c8c8c8;
  border-radius: 4px;
  display: flex;
  align-items: center;
  justify-content: ${p => (p.$between ? 'space-between' : 'center')};
  padding: ${p => (p.$between ? '0 2px 2px 3px' : '0 0 2px')};
`;
const DoubleDown = styled.span`
  width: 14px;
  height: 14px;
  border: 1px solid #3a7cc4;
  border-radius: 3px;
  display: flex;
  background: #eaf3fc;
`;
const MutedLabel = styled.span`
  color: #666;
  width: ${p => p.$w}px;
  margin-left: ${p => p.$ml || 0}px;
  padding-bottom: 2px;
  flex: none;
  white-space: nowrap;
`;
const TwoLineLabel = styled(MutedLabel)`
  line-height: 12px;
  white-space: pre;
  height: 24px;
  align-self: flex-start;
  margin-top: 3px;
`;
const MonitorColumn = styled.div`
  display: flex;
  flex-direction: column;
  align-items: center;
  margin-left: 14px;
  padding-top: 10px;
  gap: 2px;
`;
const MonitorLamp = styled.div`
  width: 110px;
  height: 34px;
  background: #7fff00;
  border: 1px solid #5f6f58;
  color: #112;
  display: flex;
  align-items: center;
  justify-content: center;
`;
const GridPanel = styled.div`
  flex: 1;
  min-height: 0;
  display: flex;
  justify-content: space-between;
  margin: 0 0 0 1px;
  border-top: 1px solid #c4c4c4;
  border-right: 1px solid #c4c4c4;
  overflow: hidden;
`;
const Table = styled.div`
  width: 643px;
  flex: none;
  font: 8px "Liberation Sans", sans-serif;
  letter-spacing: 0;
  color: #222;
  overflow: hidden;
  border-right: 1px solid #9c9c9c;
  background: #fff;
`;
const TableRow = styled.div`
  display: grid;
  grid-template-columns: 100px repeat(16, 14px) 2px 185px 131px;
  height: ${p => p.$h || 14}px;
`;
const Head = styled.div`
  background: linear-gradient(#f4f4f4, #c3c3c3);
  border-right: 1px solid #808080;
  border-bottom: 1px solid #808080;
  display: flex;
  align-items: center;
  justify-content: ${p => (p.$left ? 'flex-start' : 'center')};
  padding-left: ${p => (p.$left ? 3 : 0)}px;
  white-space: nowrap;
`;
const BitCell = styled.div`
  background: ${p => (p.$v ? '#0000f0' : p.$alt ? '#edf5fd' : '#fff')};
  color: ${p => (p.$v ? '#fff' : '#222')};
  border-right: 1px dotted #555;
  border-bottom: 1px dotted #555;
  font-size: 9px;
  display: flex;
  align-items: center;
  justify-content: center;
  outline: ${p => (p.$focus ? '1px dashed #111' : 'none')};
  outline-offset: -2px;
`;
const Gap = styled.div`
  background: #bdbdbd;
  border-left: 1px solid #808080;
`;
const ValueCell = styled.div`
  background: ${p => (p.$alt ? '#edf5fd' : '#fff')};
  border-right: 1px solid #808080;
  border-bottom: 1px solid #808080;
  text-align: ${p => (p.$right ? 'right' : 'left')};
  padding: 0 ${p => (p.$right ? 1 : 0)}px 0 ${p => (p.$right ? 0 : 2)}px;
  font-size: 8.5px;
  line-height: 13px;
  white-space: nowrap;
`;
const Scroll = styled.div`
  width: 17px;
  flex: none;
  border-left: 1px solid #fff;
  display: flex;
  flex-direction: column;
  align-items: center;
  position: relative;
  padding-top: 6px;
`;
const ScrollThumb = styled.div`
  width: 6px;
  height: 17px;
  margin-top: 53px;
  border-radius: 3px;
  background: #8c8c8c;
`;
const ScrollArrow = styled.i`
  width: 9px;
  height: 6px;
  border: 4.500px solid transparent;
  ${p => (p.$down
    ? 'border-top:6px solid #8a8a8a;border-bottom:0;position:absolute;bottom:4px;'
    : 'border-bottom:6px solid #8a8a8a;border-top:0;')}
`;
const Rail = styled.div`
  width: 15px;
  flex: none;
  display: flex;
  flex-direction: column;
  padding-top: 2px;
`;
const RailTab = styled.div`
  height: ${p => p.$h}px;
  margin-top: ${p => p.$mt || 0}px;
  background: #3f5176;
  border-radius: 3px 0 0 3px;
  display: flex;
  flex-direction: column;
  align-items: flex-start;
  color: #e4e9f3;
  overflow: hidden;
  flex: none;
`;
const RailText = styled.span`
  writing-mode: vertical-rl;
  white-space: nowrap;
  font: 12px "Liberation Sans", sans-serif;
  letter-spacing: ${p => p.$ls || 0}px;
  line-height: 15px;
  margin-top: ${p => p.$mt ?? 5}px;
`;
const StatusBar = styled.footer`
  height: 20px;
  flex: none;
  background: #29375a;
  display: flex;
  align-items: center;
  color: #e6ebf5;
  position: relative;
`;
const StatusCell = styled.div`
  width: ${p => p.$w}px;
  height: 17px;
  flex: none;
  border-right: ${p => (p.$line ? '1px solid #d8dde8' : '0')};
  padding-left: ${p => p.$pad || 0}px;
  color: ${p => p.$c || 'inherit'};
  line-height: 15px;
`;
const SizeGrip = styled.i`
  position: absolute;
  right: 1px;
  bottom: 1px;
  width: 9px;
  height: 9px;
  background: radial-gradient(circle, #d5dbe6 1px, transparent 1.100px) 0 0 / 3px 3px;
  clip-path: polygon(100% 0, 100% 100%, 0 100%);
`;
const BottomStrip = styled.div`
  height: 4px;
  flex: none;
  background: linear-gradient(90deg, #000 0 50px, #c9c9c9 50px 1173px, #000 1173px);
`;

/* ---------- data ---------- */
const MENU = ['Project', 'Edit', 'Find/Replace', 'Convert', 'View', 'Online', 'Debug', 'Recording', 'Diagnostics', 'Tool', 'Window', 'Help'];
const TREE = [
  ['Project', 0, 'proj'], ['Module Configuration', 1, 'module'], ['Program', 1, 'progf', 1], ['Initial', 2, 'pou'],
  ['Scan', 2, 'pou', 1], ['MAIN', 3, 'main', 1], ['ProgPou', 4, 'progpou', 1], ['Local Label', 5, 'local'],
  ['ProgramBody', 5, 'body', 0, 1], ['Fixed Scan', 2, 'pou'], ['Event', 2, 'pou'], ['Standby', 2, 'pou'],
  ['No Execution Type', 2, 'pou'], ['Unregistered Program', 2, 'unreg'], ['FB/FUN', 1, 'fb'], ['Label', 1, 'labelf', 1],
  ['Global Label', 2, 'labelf', 1], ['Global', 3, 'local'], ['Structured Data Types', 2, 'struct'], ['Device', 1, 'devf', 1],
  ['Device Comment', 2, 'comment', 1],
];
const BITS = ['F', 'E', 'D', 'C', 'B', 'A', '9', '8', '7', '6', '5', '4', '3', '2', '1', '0'];
const VALUES = { 999: [5, '..'], 1000: [-17425, 'ï»'], 1001: [12735, '¿1'], 1003: [50, '2.'], 1004: [51, '3.'], 1005: [52, '4.'], 1006: [53, '5.'] };
const ROWS = [999, ...Array.from({ length: 30 }, (_, i) => 1000 + i)].map((n, i) => {
  const [value, str] = VALUES[n] || [0, '..'];
  const bits = BITS.map((_, b) => ((value & 0xffff) >> (15 - b)) & 1);
  return { name: `D${n}`, value, str, bits, alt: i % 2 === 0 };
});

const PinX = () => (
  <PaneActions>
    <Svg width="10" height="12" viewBox="0 0 10 12"><path d="M2 0h6v1H7v5l2 1v1H5.500v4h-1V8H1V7l2-1V1H2z" fill="#c6cfde" /></Svg>
    <Svg width="10" height="10" viewBox="0 0 10 10"><path d="M1 1l8 8M9 1L1 9" stroke="#c6cfde" strokeWidth="2" /></Svg>
  </PaneActions>
);

export default function App() {
  return (
    <Page>
      <Global />
      <TopStrip />
      <TitleBar>
        <Icon name="logo" size={18} />
        MELSOFT GX Works3 ...s\Program_Examples\SD_card_sim\FTP_CSV_READ.gx3 - [1 [Device/Buffer Memory Batch Monitor] Monitoring]
        <CaptionButtons>
          <CaptionButton aria-label="min"><Svg width="10" height="10" viewBox="0 0 10 10"><path d="M0 5h10" stroke="#888" /></Svg></CaptionButton>
          <CaptionButton aria-label="max"><Svg width="10" height="10" viewBox="0 0 10 10"><rect x=".5" y=".5" width="9" height="9" rx="1" fill="none" stroke="#888" /></Svg></CaptionButton>
          <CaptionButton aria-label="close"><Svg width="10" height="10" viewBox="0 0 10 10"><path d="M0 0l10 10M10 0L0 10" stroke="#888" /></Svg></CaptionButton>
        </CaptionButtons>
      </TitleBar>
      <MenuBar>
        <Grip $mr={11} />
        {MENU.map(m => <MenuItem key={m}>{m}</MenuItem>)}
        <MdiButtons>
          <Svg width="12" height="12" viewBox="0 0 12 12"><path d="M2 9h7" stroke="#111" strokeWidth="2" /></Svg>
          <Svg width="12" height="12" viewBox="0 0 12 12"><rect x="1" y="3.500" width="7" height="7" fill="none" stroke="#111" /><path d="M4 3V1h7v6H8.500" fill="none" stroke="#111" /></Svg>
          <Svg width="12" height="12" viewBox="0 0 12 12"><path d="M2 2l8 8M10 2l-8 8" stroke="#111" strokeWidth="1.800" /></Svg>
        </MdiButtons>
      </MenuBar>
      <ToolArea>
        <ToolRow>
          <ToolBar $w={265}>
            <Grip $h={14} $mr={1} />
            <Tools items={['new', 'open', 'save', 'print~', <Sep $g={2} />, 'clockpage~', <Sep $g={2} />, 'help']} />
            <Combo $w={99} $ml={1} />
            <Overflow />
          </ToolBar>
          <ToolBar $w={727}>
            <Grip $h={14} $mr={0} />
            <Tools items={['cut~', 'copy~', 'paste~', 'undo~', 'redo~', '|', 'devbin', 'greenbin', 'hkobin', 'pages1~', 'pages2~', '|', 'plcR', 'plcL', 'plcFindG', 'plcFindR', 'plcFindGrey~', 'plcFindR2', '|', 'devplc', 'devoff~', '|', 'downmsg', 'plcplay', 'downmsgs', '|', 'pcG', 'pcoff~', '|', 'pcG', <Sep $g={2} />, 'zoomin', 'zoomout', 'fitw~']} />
            <Combo $w={70} $ml={0} $pad={3}>100%</Combo>
            <Overflow />
          </ToolBar>
          <ToolBar $fill>
            <Grip $h={14} $mr={0} />
            <Tools items={['link', '|', 'play', 'check', 'check', 'modoff~', 'plcok', 'timerx']} />
            <Overflow />
          </ToolBar>
        </ToolRow>
        <ToolRow>
          <ToolBar $w={686}>
            <Grip $h={14} $mr={1} />
            <Tools items={['tree!', 'conn!', 'hko', '|', 'chip!', '|', 'winCyan!', 'winDots!', '|', 'bins!', 'winbin', '|', 'devbindrop', 'v', <Sep $g={1} />, 'devtable!', 'devbinR', 'devtree', '|', 'timerbin!', 'timerdev!', '|', 'list', '|', 'pagesoff~', 'wiz', '|', 'edit!', 'io', '|', 'checkoff~', '|', 'deveye', 'v', '|', 'plug', 'v', '|', 'winmag', 'resize~', 'binoff~', 'clipoff~']} />
            <Overflow />
          </ToolBar>
          <ToolBar $w={138}>
            <Grip $h={14} $mr={2} />
            <Tools items={['winoff', 'chipoff', 'tableoff', 'listoff', 'stack', 'v']} />
            <Overflow />
          </ToolBar>
        </ToolRow>
        <ToolRow>
          <WhiteBar $w={160}>
            <Grip $h={14} $mr={0} />
            <Slot $w={23}><Icon name="bw" /></Slot><Drop $mr={1} />
            <Slot $w={23}><Icon name="bit16" /></Slot><Drop $mr={1} />
            <Slot $w={23}><Icon name="abc" /></Slot><Drop $mr={1} />
            <Slot $w={23}><Icon name="ten" /></Slot><Drop $mr={1} />
            <Slot $w={23}><Icon name="table" /></Slot>
            <Overflow />
          </WhiteBar>
        </ToolRow>
      </ToolArea>
      <Body>
        <LeftColumn>
          <PaneTitle>Navigation<PinX /></PaneTitle>
          <NavTools>
            <Slot $w={28}><Icon name="collapseTree" /></Slot>
            <Sep $g={3} />
            <Slot $w={22}><Icon name="expandTree" /></Slot>
            <Sep $g={2} />
            <Slot $w={24}><FaCog size={16} color="#333" /></Slot>
            <Sep $g={2} />
            <Combo $w={100} $ml={0}>All</Combo>
          </NavTools>
          <TreeFrame>
            <Tree>
              {TREE.map(([label, d, icon, box, sel]) => (
                <TreeRow key={label} $sel={sel} $indent={box ? 14 * d - 11 : 4 + 14 * d}>
                  {box ? <Toggle /> : null}
                  <TreeIcon><Icon name={icon} /></TreeIcon>
                  {label}
                </TreeRow>
              ))}
            </Tree>
            <TreeScroll><TreeThumb /></TreeScroll>
          </TreeFrame>
          <PaneTabs>
            <PaneTab $w={148}><Icon name="conn" size={16} />Connection Destination</PaneTab>
            <PaneTab $on $w={86}><Icon name="navTab" size={16} />Navigation</PaneTab>
          </PaneTabs>
          <PaneTitle $mt={4}>Quick Find<PinX /></PaneTitle>
          <FindBar>Find Target: Menu<SmallDown /></FindBar>
          <FindBody>
            <SearchCombo>Data Operation<Chevron /></SearchCombo>
            <Svg width="20" height="20" viewBox="0 0 20 20">
              <circle cx="12" cy="8" r="5.500" fill="#dceefc" stroke="#7ba3c9" strokeWidth="1.500" />
              <path d="M8 12l-6 6" stroke="#c98a4a" strokeWidth="3" />
            </Svg>
          </FindBody>
          <DocksBottom>
            <DockTab $w={82}><Icon name="devlist" size={16} />Device List</DockTab>
            <DockTab $w={118}><Icon name="crossref" size={16} />Cross Reference 1</DockTab>
            <DockTab $w={118}><Icon name="quickres" size={16} />Quick Find Result</DockTab>
          </DocksBottom>
        </LeftColumn>
        <Main>
          <DocTabs>
            <DocTab $w={215}><Icon name="body" size={16} />ProgramBody : ProgPou [PRG] [...</DocTab>
            <DocTab $on $w={220}><Icon name="monitor" size={16} />1 [Device/Buffer Memory Batch...<TabClose>×</TabClose></DocTab>
            <TabNav><Tri $dir="l" /><Tri $dir="r" /><Tri $dir="d" /></TabNav>
          </DocTabs>
          <DocFrame>
            <DocInner>
              <Form>
                <FormFields>
                  <FormRow $h={24}>
                    <Radio $on>Device Name</Radio>
                    <Select $w={189}>D999<Chevron /></Select>
                    <FormButton $w={160} $ml={10}>Open Display Format...</FormButton>
                    <FormButton $w={143} $ml={9} $between>Detailed Conditions
                      <DoubleDown><Svg width="12" height="12" viewBox="0 0 12 12"><path d="M2 2l4 3 4-3M2 6l4 3 4-3" fill="none" stroke="#245" strokeWidth="1.300" /></Svg></DoubleDown>
                    </FormButton>
                  </FormRow>
                  <FormRow $h={20} $mt={16}>
                    <Radio $ls={-0.8}>Buffer Memory</Radio>
                    <TwoLineLabel $w={79}>{'Intelligent\nModule No.(U)'}</TwoLineLabel>
                    <Select $off $inset $w={111}><InsetFill /><Chevron abs c="#aaa" /></Select>
                    <MutedLabel $w={67} $ml={8}>(HEX)</MutedLabel>
                    <MutedLabel $w={69}>Address</MutedLabel>
                    <Select $off $inset $w={110}><InsetFill /><Chevron abs c="#aaa" /></Select>
                    <Select $off $w={60} $ml={8}>DEC<Chevron c="#aaa" /></Select>
                  </FormRow>
                </FormFields>
                <MonitorColumn>
                  <MonitorLamp>Monitoring</MonitorLamp>
                  <FormButton $w={108} $h={32}>Stop Monitoring</FormButton>
                </MonitorColumn>
              </Form>
              <GridPanel>
                <Table>
                  <TableRow $h={13}>
                    <Head $left>Device Name</Head>
                    {BITS.map(b => <Head key={b}>{b}</Head>)}
                    <Gap />
                    <Head>Current Value</Head>
                    <Head>String</Head>
                  </TableRow>
                  {ROWS.map((r, ri) => (
                    <TableRow key={r.name}>
                      <Head $left>{r.name}</Head>
                      {r.bits.map((v, i) => <BitCell key={i} $v={v} $alt={r.alt} $focus={ri === 0 && i === 15}>{v}</BitCell>)}
                      <Gap />
                      <ValueCell $alt={r.alt} $right>{r.value}</ValueCell>
                      <ValueCell $alt={r.alt}>{r.str}</ValueCell>
                    </TableRow>
                  ))}
                </Table>
                <Scroll>
                  <ScrollArrow />
                  <ScrollThumb />
                  <ScrollArrow $down />
                </Scroll>
              </GridPanel>
            </DocInner>
          </DocFrame>
        </Main>
        <Rail>
          <RailTab $h={262}>
            <Icon name="sideInput" size={15} />
            <RailText $ls={0.1} $mt={8}>Input the Configuration Detailed Information</RailText>
          </RailTab>
          <RailTab $h={122} $mt={2}>
            <Icon name="sideBin" size={15} />
            <RailText $ls={0.5}>Find and Replace</RailText>
          </RailTab>
          <RailTab $h={122} $mt={15}>
            <Icon name="sideChip" size={15} />
            <RailText $ls={0.5} $mt={3}>Element Selection</RailText>
          </RailTab>
          <RailTab $h={43} $mt={19}>
            <Icon name="sideOut" size={15} />
            <RailText $ls={0.5} $mt={3}>Output</RailText>
          </RailTab>
        </Rail>
      </Body>
      <StatusBar>
        <StatusCell $w={321} $line />
        <StatusCell $w={185} $line />
        <StatusCell $w={143} $line />
        <StatusCell $w={112} $line $pad={5}>FX5U</StatusCell>
        <StatusCell $w={320} $line $pad={7}>Simulation (1)</StatusCell>
        <StatusCell $w={74} $line />
        <StatusCell $w={33} $line $pad={5} $c="#66708a">CAP</StatusCell>
        <StatusCell $w={40} $pad={5}>NUM</StatusCell>
        <SizeGrip />
      </StatusBar>
      <BottomStrip />
    </Page>
  );
}
